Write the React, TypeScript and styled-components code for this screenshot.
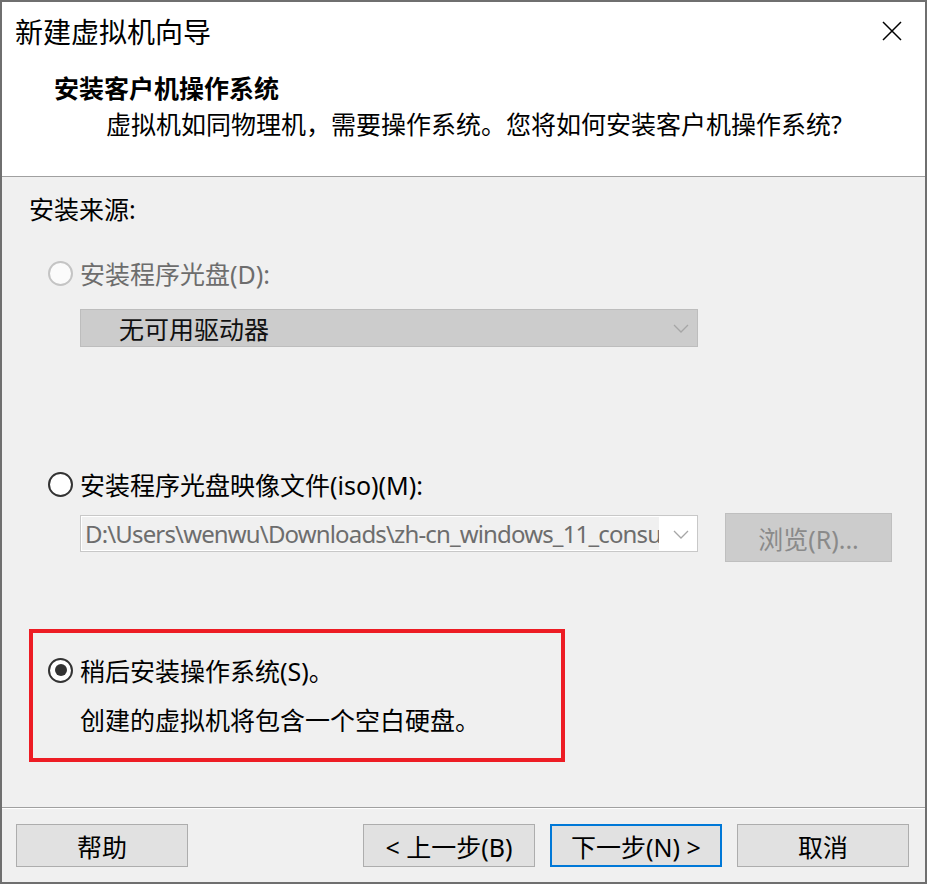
import React from "react";
import styled, { createGlobalStyle } from "styled-components";

const GlobalStyle = createGlobalStyle`
  html, body {
    margin: 0;
    padding: 0;
    background: #6f6f6f;
  }
  body {
    font-family: "Noto Sans", "Noto Sans CJK SC", sans-serif;
    color: #000000;
  }
  * {
    box-sizing: border-box;
  }
`;

const Window = styled.div`
  width: 927px;
  height: 884px;
  border: 2px solid #6f6f6f;
  display: flex;
  flex-direction: column;
  background: #f0f0f0;
  overflow: hidden;
`;

const Header = styled.div`
  height: 175px;
  background: #ffffff;
  border-bottom: 1px solid #a0a0a0;
  display: flex;
  flex-direction: column;
`;

const TitleBar = styled.div`
  height: 60px;
  display: flex;
  align-items: center;
  justify-content: space-between;
  padding: 0 23px 0 13px;
`;

const Title = styled.span`
  font-size: 28px;
  line-height: 60px;
`;

const CloseButton = styled.svg`
  width: 20px;
  height: 20px;
  margin-top: -3px;
`;

const Heading = styled.div`
  margin-top: 8px;
  padding-left: 52px;
  font-size: 25px;
  font-weight: 700;
  line-height: 36px;
`;

const Subtitle = styled.div`
  padding-left: 104px;
  font-size: 25px;
  line-height: 36px;
`;

const Content = styled.div`
  flex: 1;
  display: flex;
  flex-direction: column;
  padding: 15px 0 0 27px;
`;

const SectionLabel = styled.div`
  font-size: 25px;
  line-height: 34px;
`;

const OptionRow = styled.label<{ $top: number; $disabled?: boolean }>`
  margin-top: ${(p) => p.$top}px;
  height: 34px;
  display: flex;
  align-items: center;
  gap: 7px;
  padding-left: 19px;
  font-size: 25px;
  color: ${(p) => (p.$disabled ? "#6d6d6d" : "#000000")};
`;

const RadioCircle = styled.span<{ $disabled?: boolean; $checked?: boolean }>`
  width: 25px;
  height: 25px;
  border-radius: 50%;
  border: 2px solid ${(p) => (p.$disabled ? "#c4c4c4" : "#333333")};
  background: ${(p) => (p.$disabled ? "#fbfbfb" : "#ffffff")};
  display: flex;
  align-items: center;
  justify-content: center;
  flex-shrink: 0;

  &::after {
    content: "";
    display: ${(p) => (p.$checked ? "block" : "none")};
    width: 12px;
    height: 12px;
    border-radius: 50%;
    background: #333333;
  }
`;

const DriveSelect = styled.div`
  margin: 19px 0 0 51px;
  width: 618px;
  height: 38px;
  background: #cccccc;
  border: 1px solid #bdbdbd;
  display: flex;
  align-items: center;
  justify-content: space-between;
  padding: 0 8px 0 38px;
  font-size: 25px;
  color: #111111;
`;

const Chevron = styled.svg`
  width: 16px;
  height: 10px;
  flex-shrink: 0;
`;

const IsoRow = styled.div`
  margin: 12px 0 0 51px;
  display: flex;
  align-items: flex-start;
  gap: 27px;
`;

const IsoCombo = styled.div`
  margin-top: 2px;
  width: 618px;
  height: 37px;
  background: #ffffff;
  border: 1px solid #c8c8c8;
  display: flex;
  align-items: center;
  padding: 1px 8px 1px 1px;
  gap: 14px;
`;

const IsoPath = styled.div`
  flex: 1;
  min-width: 0;
  height: 100%;
  background: #f0f0f0;
  color: #6d6d6d;
  font-size: 24px;
  letter-spacing: -0.85px;
  line-height: 33px;
  padding-left: 3px;
  white-space: nowrap;
  overflow: hidden;
`;

const BrowseButton = styled.div`
  width: 167px;
  height: 49px;
  background: #cccccc;
  border: 1px solid #bfbfbf;
  display: flex;
  align-items: center;
  justify-content: center;
  font-size: 25px;
  color: #8a8a8a;
`;

const Highlight = styled.div`
  margin: 67px 0 0 0;
  width: 536px;
  height: 133px;
  border: 4px solid #ed1c24;
  display: flex;
  flex-direction: column;
  padding-top: 20px;
`;

const HighlightRow = styled(OptionRow)`
  padding-left: 15px;
`;

const Note = styled.div`
  margin-top: 16px;
  padding-left: 47px;
  font-size: 25px;
  line-height: 34px;
`;

const Footer = styled.div`
  height: 75px;
  border-top: 1px solid #a0a0a0;
  box-shadow: inset 0 1px 0 #ffffff;
  display: flex;
  align-items: flex-start;
  padding: 16px 16px 0 14px;
  gap: 15px;
`;

const Spacer = styled.div`
  flex: 1;
`;

const DialogButton = styled.div<{ $default?: boolean }>`
  width: 172px;
  height: 43px;
  background: #e1e1e1;
  border: ${(p) => (p.$default ? "2px solid #0078d7" : "1px solid #adadad")};
  display: flex;
  align-items: center;
  justify-content: center;
  font-size: 25px;
  color: #000000;
`;

const ChevronIcon = ({ color }: { color: string }) => (
  <Chevron viewBox="0 0 16 10">
    <polyline points="1,2 8,9 15,2" fill="none" stroke={color} strokeWidth="1.3" />
  </Chevron>
);

const App = () => (
  <>
    <GlobalStyle />
    <Window>
      <Header>
        <TitleBar>
          <Title>新建虚拟机向导</Title>
          <CloseButton viewBox="0 0 20 20">
            <path d="M1 1 L19 19 M19 1 L1 19" stroke="#000" strokeWidth="1.5" fill="none" />
          </CloseButton>
        </TitleBar>
        <Heading>安装客户机操作系统</Heading>
        <Subtitle>虚拟机如同物理机，需要操作系统。您将如何安装客户机操作系统?</Subtitle>
      </Header>

      <Content>
        <SectionLabel>安装来源:</SectionLabel>

        <OptionRow $top={30} $disabled>
          <RadioCircle $disabled />
          安装程序光盘(D):
        </OptionRow>
        <DriveSelect>
          无可用驱动器
          <ChevronIcon color="#a6a6a6" />
        </DriveSelect>

        <OptionRow $top={120}>
          <RadioCircle />
          安装程序光盘映像文件(iso)(M):
        </OptionRow>
        <IsoRow>
          <IsoCombo>
            <IsoPath>D:\Users\wenwu\Downloads\zh-cn_windows_11_consu</IsoPath>
            <ChevronIcon color="#a6a6a6" />
          </IsoCombo>
          <BrowseButton>浏览(R)...</BrowseButton>
        </IsoRow>

        <Highlight>
          <HighlightRow $top={0}>
            <RadioCircle $checked />
            稍后安装操作系统(S)。
          </HighlightRow>
          <Note>创建的虚拟机将包含一个空白硬盘。</Note>
        </Highlight>
      </Content>

      <Footer>
        <DialogButton>帮助</DialogButton>
        <Spacer />
        <DialogButton>&lt; 上一步(B)</DialogButton>
        <DialogButton $default>下一步(N) &gt;</DialogButton>
        <DialogButton>取消</DialogButton>
      </Footer>
    </Window>
  </>
);

export default App;
